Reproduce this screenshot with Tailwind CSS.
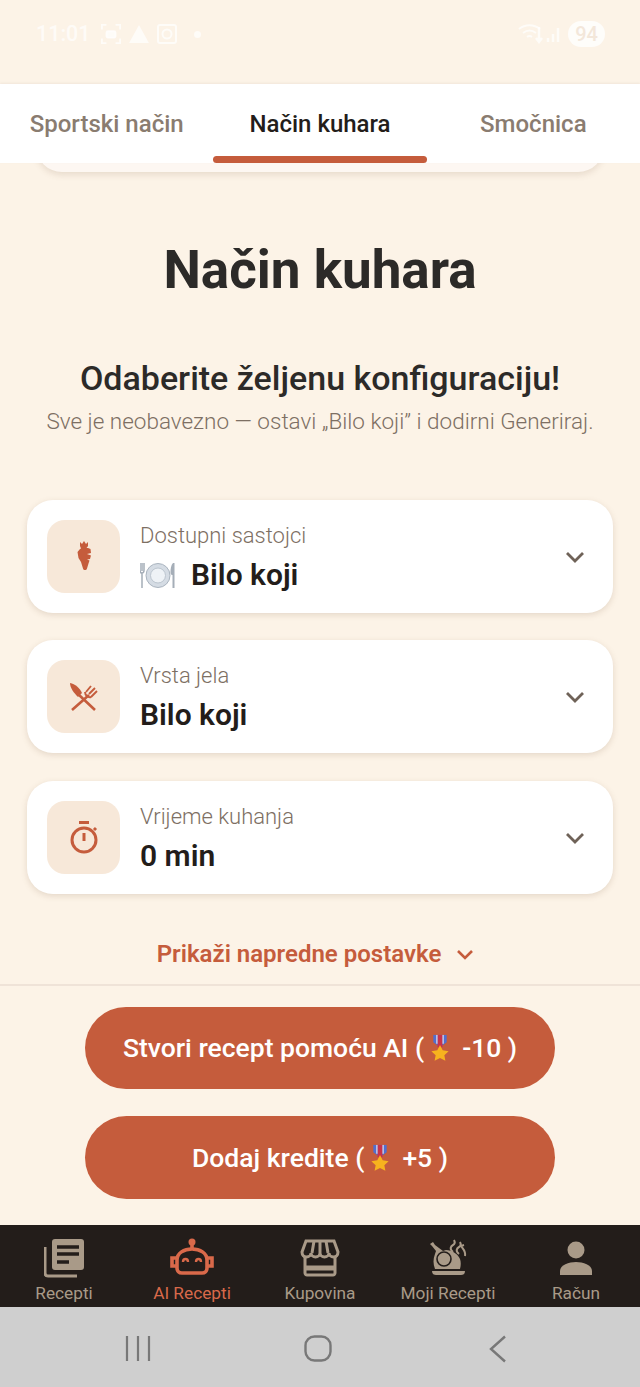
<!DOCTYPE html>
<html lang="hr">
<head>
  <meta charset="UTF-8" />
  <meta name="viewport" content="width=device-width, initial-scale=1.0" />
  <title>Način kuhara</title>
  <script src="https://cdn.jsdelivr.net/npm/@tailwindcss/browser@4"></script>
</head>
<body class="bg-[#fcf3e7] font-['Roboto',sans-serif] text-[#231d1a]">
  <svg width="0" height="0" class="absolute">
    <defs>
      <symbol id="medal" viewBox="0 0 24 32">
        <path d="M4 0h16v9l-8 6-8-6z" fill="#4f6fd0"/>
        <path d="M9 0h6v15H9z" fill="#c8324a"/>
        <path d="M7.500 0h1.500v11H7.500zM15 0h1.500v11H15z" fill="#e3d5e0"/>
        <path d="M12 12l3.600 7.200 7.900 1.100-5.700 5.600 1.400 7.100-7.200-3.500-7.200 3.500 1.400-7.100L.5 20.300l7.900-1.100z" fill="#f7b21e" transform="translate(1.200 1.500) scale(.9)"/>
      </symbol>
    </defs>
  </svg>

  <div class="w-[640px] h-[1387px] flex flex-col overflow-hidden">
    <!-- status bar -->
    <div class="h-[84px] shrink-0 flex justify-between items-start pt-[21px] pl-[36px] pr-[35px] text-white/70">
      <div class="flex items-center gap-[8px]">
        <span class="text-[21.500px] leading-[26px] font-medium mr-[2px]">11:01</span>
        <svg width="20" height="20" viewBox="0 0 22 22" fill="none" stroke="currentColor" stroke-width="2"><path d="M1 6V1h5M16 1h5v5M21 16v5h-5M6 21H1v-5"/><rect x="6" y="8" width="10" height="7" rx="1.500" fill="currentColor"/></svg>
        <svg width="20" height="18" viewBox="0 0 21 19" fill="currentColor"><path d="M10.500 0L21 19H0z"/></svg>
        <svg width="20" height="20" viewBox="0 0 20 20" fill="none" stroke="currentColor" stroke-width="2"><rect x="1" y="1" width="18" height="18" rx="2"/><circle cx="10" cy="10" r="4.500"/></svg>
        <span class="ml-[9px] size-[7px] rounded-full bg-current"></span>
      </div>
      <div class="flex items-center gap-[6px]">
        <svg width="44" height="24" viewBox="0 0 44 24" fill="none" stroke="currentColor" stroke-width="2"><path d="M1 7c6-5 15-5 21 0M5 11c4-3 9-3 13 0M9 15c2-1.500 3-1.500 5 0"/><path d="M21 5v14M18 16l3 4 3-4" stroke-width="2.500"/><path d="M30 20v-4M35 20v-8M40 20V6" stroke-width="2.500"/></svg>
        <span class="w-[37px] h-[26px] rounded-[13px] bg-white/80 text-[#f3e7da] text-[20px] leading-[26px] font-medium text-center">94</span>
      </div>
    </div>

    <!-- tabs -->
    <div class="relative z-10 h-[79px] shrink-0 bg-white grid grid-cols-3 shadow-[0_-1px_2px_rgba(120,90,60,0.08)]">
      <div class="flex justify-center pt-[26px] text-[24px] leading-[29px] font-medium text-[#8a7c70]">Sportski način</div>
      <div class="relative flex justify-center pt-[26px] text-[24px] leading-[29px] font-medium text-[#231d1a]">
        Način kuhara
        <span class="absolute bottom-0 left-0 right-0 h-[7px] rounded-[4px] bg-[#c55c3c]"></span>
      </div>
      <div class="flex justify-center pt-[26px] text-[24px] leading-[29px] font-medium text-[#8a7c70]">Smočnica</div>
    </div>
    <div class="mx-[36px] mt-[-21px] h-[30px] shrink-0 bg-[#fdf7f2] rounded-b-[26px] shadow-[0_3px_6px_rgba(120,90,60,0.15)]"></div>

    <!-- heading -->
    <h1 class="mt-[67px] text-center text-[53px] leading-[62px] font-bold text-[#2c2a28]">Način kuhara</h1>
    <h2 class="mt-[57px] text-center text-[34px] leading-[40px] font-medium text-[#2c2a28]">Odaberite željenu konfiguraciju!</h2>
    <p class="mt-[10px] text-center text-[22.500px] leading-[26px] font-light text-[#7d6f63]">Sve je neobavezno — ostavi „Bilo koji” i dodirni Generiraj.</p>

    <!-- option cards -->
    <div class="mt-[66px] mx-[27px] flex flex-col">
      <div class="h-[113px] rounded-[26px] bg-white shadow-[0_2px_6px_rgba(120,90,60,0.18)] flex items-center pl-[20px] pr-[28px]">
        <div class="size-[73px] rounded-[18px] bg-[#f7e8d9] flex items-center justify-center">
          <svg width="14" height="31" viewBox="0 0 14 31" fill="#c55c3c"><path d="M3 1l2 2 2-3 2 3 2-2v4l-1.500 2H11l2.500 1 .5 4-4 1 4 1.500-1 3.500-3 .5 2.500 1-1 3-1.500 5c-.5 2-3.500 2-4 0L4 21 1.500 17 .5 11 3 8l1-.5L3 5z"/></svg>
        </div>
        <div class="ml-[20px] flex-1 pt-[3px]">
          <div class="text-[22px] leading-[26px] font-light text-[#7d6f63]">Dostupni sastojci</div>
          <div class="mt-[8px] flex items-center text-[30px] leading-[36px] font-semibold">
            <svg class="mr-[15px]" width="36" height="27" viewBox="0 0 36 27"><circle cx="18" cy="13.500" r="12" fill="#d5dce4" stroke="#aab4bf"/><circle cx="18" cy="13.500" r="7.500" fill="#eef2f6" stroke="#bcc5cf"/><path d="M2 1v8M0 1v7c0 2 1 3 2 3s2-1 2-3V1M2 11v15" stroke="#a5aeb8" stroke-width="1.500" fill="none"/><path d="M33 1c-2 2-2.500 6-2.500 9s1 3 2 3V26h2V1z" fill="#a5aeb8"/></svg>
            Bilo koji
          </div>
        </div>
        <svg width="20" height="12" viewBox="0 0 20 12" fill="none" stroke="#6f6258" stroke-width="2.800"><path d="M2 2l8 8 8-8"/></svg>
      </div>

      <div class="mt-[27px] h-[113px] rounded-[26px] bg-white shadow-[0_2px_6px_rgba(120,90,60,0.18)] flex items-center pl-[20px] pr-[28px]">
        <div class="size-[73px] rounded-[18px] bg-[#f7e8d9] flex items-center justify-center">
          <svg width="29" height="28" viewBox="0 0 29 28" fill="none" stroke="#c55c3c" stroke-width="2.600"><path d="M1 0c5 1 10 5 12 10l-4 4C5 10 1 5 1 0z" fill="#c55c3c" stroke="none"/><path d="M9 11l17 16M20 12L3 27"/><path d="M17 9l5-6M20 11l6-6M22 14l6-6M16 9c0 3 3 6 6 5" stroke-width="1.900"/></svg>
        </div>
        <div class="ml-[20px] flex-1 pt-[3px]">
          <div class="text-[22px] leading-[26px] font-light text-[#7d6f63]">Vrsta jela</div>
          <div class="mt-[8px] text-[30px] leading-[36px] font-semibold">Bilo koji</div>
        </div>
        <svg width="20" height="12" viewBox="0 0 20 12" fill="none" stroke="#6f6258" stroke-width="2.800"><path d="M2 2l8 8 8-8"/></svg>
      </div>

      <div class="mt-[28px] h-[113px] rounded-[26px] bg-white shadow-[0_2px_6px_rgba(120,90,60,0.18)] flex items-center pl-[20px] pr-[28px]">
        <div class="size-[73px] rounded-[18px] bg-[#f7e8d9] flex items-center justify-center">
          <svg width="28" height="33" viewBox="0 0 28 33" fill="none" stroke="#c55c3c" stroke-width="3"><path d="M9 1.500h10"/><circle cx="14" cy="19" r="12"/><path d="M14 12v8M24 9l2-2"/></svg>
        </div>
        <div class="ml-[20px] flex-1 pt-[3px]">
          <div class="text-[22px] leading-[26px] font-light text-[#7d6f63]">Vrijeme kuhanja</div>
          <div class="mt-[8px] text-[30px] leading-[36px] font-semibold">0 min</div>
        </div>
        <svg width="20" height="12" viewBox="0 0 20 12" fill="none" stroke="#6f6258" stroke-width="2.800"><path d="M2 2l8 8 8-8"/></svg>
      </div>
    </div>

    <!-- advanced toggle -->
    <div class="mt-[45px] pr-[9px] flex justify-center items-center gap-[15px] text-[24px] leading-[30px] font-semibold text-[#c55c3c]">
      Prikaži napredne postavke
      <svg width="18" height="11" viewBox="0 0 18 11" fill="none" stroke="#c55c3c" stroke-width="2.600"><path d="M2 2l7 7 7-7"/></svg>
    </div>
    <div class="mt-[15px] h-[2px] bg-[#efe3d8] shrink-0"></div>

    <!-- actions -->
    <div class="pt-[21px] px-[85px] flex flex-col gap-[27px]">
      <div class="h-[82px] rounded-full bg-[#c55c3c] flex items-center justify-center text-white text-[26.500px] font-medium">
        Stvori recept pomoću AI (<svg class="ml-[6px] mr-[12px]" width="20" height="32" viewBox="0 0 24 32"><use href="#medal"/></svg> -10 )
      </div>
      <div class="h-[83px] rounded-full bg-[#c55c3c] flex items-center justify-center text-white text-[26.500px] font-medium">
        Dodaj kredite (<svg class="ml-[6px] mr-[12px]" width="20" height="32" viewBox="0 0 24 32"><use href="#medal"/></svg> +5 )
      </div>
    </div>

    <!-- bottom nav -->
    <div class="mt-[26px] h-[82px] shrink-0 bg-[#231d1a] grid grid-cols-5 text-[17.250px] leading-[20px] text-[#a99a88]">
      <div class="flex flex-col items-center pt-[12px]">
        <svg class="h-[42px]" width="40" height="40" viewBox="0 0 40 40"><path d="M1 9v26c0 2 1 3 3 3h29" fill="none" stroke="#a99a88" stroke-width="3"/><rect x="8" y="1" width="32" height="31" rx="3" fill="#a99a88"/><path d="M13 9h22M13 16h22M13 24h12" stroke="#231d1a" stroke-width="3.500"/></svg>
        <span class="mt-[4px]">Recepti</span>
      </div>
      <div class="flex flex-col items-center pt-[12px] text-[#d9694a]">
        <svg class="h-[42px]" width="44" height="40" viewBox="0 0 44 40" fill="none" stroke="#d9694a" stroke-width="3.600"><circle cx="22" cy="4" r="3.500" fill="#d9694a" stroke="none"/><path d="M22 7v5"/><path d="M7 30V22C7 15 14 11 22 11s15 4 15 11v8c0 3-2 5-5 5H12c-3 0-5-2-5-5z"/><path d="M7 20H2v8h5M37 20h5v8h-5"/><path d="M13 24c0-4 5-4 5 0M26 24c0-4 5-4 5 0" stroke-width="2.400"/></svg>
        <span class="mt-[4px]">AI Recepti</span>
      </div>
      <div class="flex flex-col items-center pt-[12px]">
        <svg class="h-[42px]" width="40" height="38" viewBox="0 0 40 38" fill="none" stroke="#a99a88" stroke-width="3"><path d="M6 2h28l4 11c0 3-2 5-4.500 5S29 16 29 14c0 2-2 4-4.500 4S20 16 20 14c0 2-2 4-4.500 4S11 16 11 14c0 2-2 4-4.500 4S2 16 2 13z"/><path d="M14 2l-2 12M20 2v12M26 2l2 12"/><path d="M5 18v16c0 1 1 2 2 2h26c1 0 2-1 2-2V18"/><path d="M5 29h30" stroke-width="5"/></svg>
        <span class="mt-[4px]">Kupovina</span>
      </div>
      <div class="flex flex-col items-center pt-[12px]">
        <svg class="h-[42px]" width="37" height="38" viewBox="0 0 37 38" fill="none" stroke="#a99a88" stroke-width="2"><path d="M0 5l3-2 2 3 8 6 3-1c6 0 12 4 14 9 1 3 1 6 0 10H5C3 25 3 20 5 15l1-3-4-5z" fill="#a99a88" stroke="none"/><circle cx="14" cy="20" r="7" stroke="#231d1a" stroke-width="1.600"/><path d="M2 32h33c0 3-2 4-4 4H6c-2 0-4-1-4-4z" fill="#a99a88" stroke="none"/><path d="M23 13c-4-3-2-6 0-7s2-3 1-5M29 15c-4-3-2-6 0-7s2-3 1-5M35 17c1-5-2-7-4-10l3-1"/></svg>
        <span class="mt-[4px]">Moji Recepti</span>
      </div>
      <div class="flex flex-col items-center pt-[12px]">
        <svg class="h-[42px]" width="34" height="34" viewBox="0 0 34 34" fill="#a99a88"><circle cx="17" cy="9" r="8.500"/><path d="M1 34v-4c0-6 9-9 16-9s16 3 16 9v4z"/></svg>
        <span class="mt-[4px]">Račun</span>
      </div>
    </div>

    <!-- system nav -->
    <div class="flex-1 bg-[#cfcfcf] grid grid-cols-[180px_180px_180px] items-center pl-[48px] pt-[3px]">
      <svg class="justify-self-center" width="26" height="27" viewBox="0 0 26 27" stroke="#787878" stroke-width="2.200"><path d="M2 1v25M13 1v25M24 1v25"/></svg>
      <svg class="justify-self-center" width="28" height="27" viewBox="0 0 28 27" fill="none" stroke="#787878" stroke-width="2.400"><rect x="1.500" y="1.500" width="25" height="24" rx="9"/></svg>
      <svg class="justify-self-center" width="20" height="28" viewBox="0 0 20 28" fill="none" stroke="#787878" stroke-width="2.400"><path d="M17 1.500L3 14l14 12.500"/></svg>
    </div>
  </div>
</body>
</html>
